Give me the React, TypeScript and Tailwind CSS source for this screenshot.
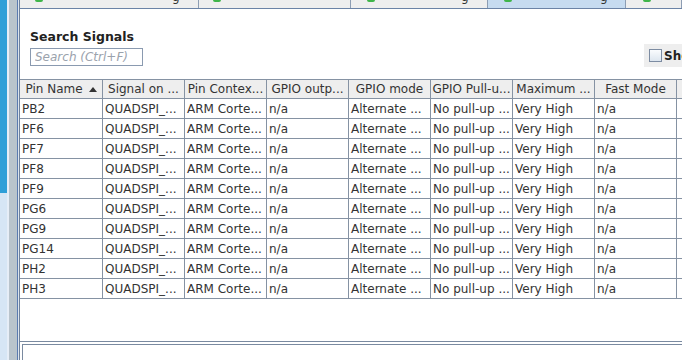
import { useState } from 'react'

const columns = [
  { label: 'Pin Name', sort: true, w: 'w-[83px]' },
  { label: 'Signal on ...', w: 'w-[82px]' },
  { label: 'Pin Contex...', w: 'w-[82px]' },
  { label: 'GPIO outp...', w: 'w-[82px]' },
  { label: 'GPIO mode', w: 'w-[82px]' },
  { label: 'GPIO Pull-u...', w: 'w-[82px]' },
  { label: 'Maximum ...', w: 'w-[82px]' },
  { label: 'Fast Mode', w: 'w-[82px]' },
  { label: '', w: 'flex-1' },
]

const pins = ['PB2', 'PF6', 'PF7', 'PF8', 'PF9', 'PG6', 'PG9', 'PG14', 'PH2', 'PH3']

const rows = pins.map((pin) => [
  pin,
  'QUADSPI_...',
  'ARM Corte...',
  'n/a',
  'Alternate ...',
  'No pull-up ...',
  'Very High',
  'n/a',
  '',
])

// tabs above the panel, only their bottom edge is visible
const tabs = [
  { w: 'w-[179px]', icon: 'ml-[15px]', g: 'ml-[129px]', selected: false },
  { w: 'w-[152px]', icon: 'ml-[14px]', g: '', selected: false },
  { w: 'w-[137px]', icon: 'ml-[16px]', g: 'ml-[86px]', selected: false },
  { w: 'w-[138px]', icon: 'ml-[16px]', g: 'ml-[88px]', selected: true },
  { w: 'flex-1', icon: 'ml-[17px]', g: '', selected: false },
]

const SortArrow = () => (
  <svg width="8" height="5" viewBox="0 0 8 5" className="ml-[6px] inline-block">
    <path d="M0 5 L4 0 L8 5 Z" fill="#333" />
  </svg>
)

const LeftStrip = () => (
  <div className="flex h-full shrink-0">
    <div className="flex w-[7px] flex-col">
      <div className="h-[193px] bg-[#2e9fd8]" />
      <div className="flex-1 bg-[#d6e6f5]" />
    </div>
    <div className="w-[2px] bg-[#e6eef7]" />
    <div className="w-[8px] bg-[#b9c4cc]" />
    <div className="w-[1px] bg-[#5b7bb0]" />
    <div className="w-[1px] bg-[#dde5ee]" />
  </div>
)

const TabStrip = () => (
  <div className="flex h-[9px] shrink-0 border-b border-[#6b83a6]">
    {tabs.map((t, i) => (
      <div
        key={i}
        className={`${t.w} flex items-start overflow-hidden border-r border-[#8d9db3] ${
          t.selected ? 'bg-[#c6dbf0]' : 'bg-[#eeeeee]'
        }`}
      >
        <span className={`${t.icon} h-[2px] w-[8px] rounded-b-full bg-[#3fb54a]`} />
        {t.g && (
          <span className={`${t.g} mt-[-10px] text-[12px] leading-[14px] text-[#333]`}>g</span>
        )}
      </div>
    ))}
  </div>
)

const SearchSection = () => {
  const [query, setQuery] = useState('')
  return (
    <div className="flex h-[70px] shrink-0 items-end justify-between pb-[12px]">
      <div className="mb-[1px] ml-[10px] flex flex-col">
        <h3 className="text-[12.5px] leading-[15px] font-bold text-[#222]">Search Signals</h3>
        <input
          value={query}
          onChange={(e) => setQuery(e.target.value)}
          placeholder="Search (Ctrl+F)"
          className="mt-[4px] h-[18px] w-[113px] border border-[#8a9ab0] px-[4px] text-[12px] leading-[16px] italic text-[#333] outline-none placeholder:text-[#9aa2ac]"
        />
      </div>
      <div className="flex h-[23px] w-[38px] shrink-0 items-center overflow-hidden bg-[#eeeeee] pl-[5px]">
        <span className="h-[13px] w-[13px] shrink-0 border border-[#7d8ca2] bg-gradient-to-b from-[#fafcfe] to-[#dde6ef]" />
        <span className="ml-[2px] whitespace-nowrap text-[12px] font-bold text-[#222]">Show</span>
      </div>
    </div>
  )
}

const PinTable = () => (
  <div className="flex shrink-0 flex-col">
    <div className="flex h-[20px] border-y border-[#8592a3] bg-[#eeeeee]">
      {columns.map((c, i) => (
        <div
          key={i}
          className={`${c.w} flex items-center justify-center overflow-hidden whitespace-nowrap border-r border-[#8592a3] text-[12px] leading-[18px] text-[#333] last:border-r-0`}
        >
          {c.label}
          {c.sort && <SortArrow />}
        </div>
      ))}
    </div>
    {rows.map((r, ri) => (
      <div key={ri} className="flex h-[20px] border-b border-[#8592a3]">
        {r.map((v, ci) => (
          <div
            key={ci}
            className={`${columns[ci].w} overflow-hidden whitespace-nowrap border-r border-[#8592a3] pl-[2px] text-[12px] leading-[20px] text-[#333] last:border-r-0`}
          >
            {v}
          </div>
        ))}
      </div>
    ))}
  </div>
)

export default function App() {
  return (
    <div className="flex h-[360px] w-[682px] overflow-hidden bg-white font-['DejaVu_Sans',sans-serif]">
      <LeftStrip />
      <div className="flex min-w-0 flex-1 flex-col border-l border-[#6f829c]">
        <TabStrip />
        <SearchSection />
        <PinTable />
        <div className="h-[42px] shrink-0" />
        <div className="h-[1px] shrink-0 bg-[#7a8aa0]" />
        <div className="ml-[2px] mt-[2px] flex-1 border-l border-t border-[#7a8aa0]" />
      </div>
    </div>
  )
}
